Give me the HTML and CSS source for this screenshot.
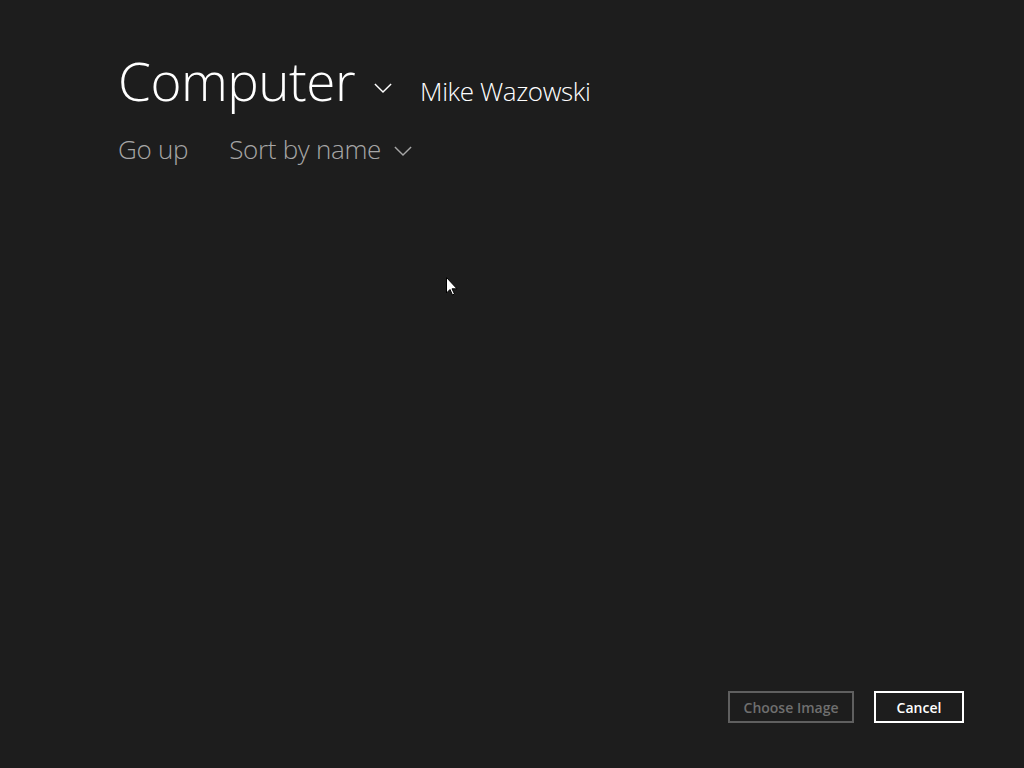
FILE: index.html
```html
<!DOCTYPE html>
<html lang="en">
<head>
<meta charset="UTF-8" />
<title>Computer</title>
<link rel="stylesheet" href="styles.css">
</head>
<body>
<div class="picker">
  <header class="top">
    <div class="location">
      <h1>Computer</h1>
      <svg class="chev big" viewBox="0 0 20 12" width="18" height="11"><path d="M1 1 L10 10 L19 1" fill="none" stroke="#fff" stroke-width="1.6"/></svg>
      <span class="user">Mike Wazowski</span>
    </div>
    <nav class="tools">
      <span class="tool">Go up</span>
      <span class="tool">Sort by name
        <svg class="chev" viewBox="0 0 20 12" width="18" height="11"><path d="M1 1 L10 10 L19 1" fill="none" stroke="#a6a6a6" stroke-width="1.6"/></svg>
      </span>
    </nav>
  </header>

  <main class="files"></main>

  <footer class="actions">
    <button class="btn disabled">Choose Image</button>
    <button class="btn">Cancel</button>
  </footer>
</div>

<svg class="cursor" viewBox="0 0 12 19" width="12" height="19"><path d="M0.5 0.5 L0.5 16 L4 12.5 L6.5 18 L8.5 17 L6 11.8 L11 11.8 Z" fill="#fff" stroke="#000" stroke-width="1"/></svg>
</body>
</html>
```

FILE: styles.css
```css
/* Selector de archivos, tema oscuro */
body {
  margin: 0; padding: 0; background: #1d1d1d; color: #fff;
  font-family: "Open Sans", "Noto Sans", sans-serif;
  overflow: hidden;
}
.picker {
  height: 768px; display: flex; flex-direction: column;
  padding: 0 60px 0 118px; box-sizing: border-box;
}

.top { padding-top: 48px; }
.location {
  display: flex; align-items: baseline;
}
h1 {
  margin: 0; font-weight: 300; font-size: 53px; line-height: 66px;
  letter-spacing: -0.5px;
}
.chev.big { margin: 0 28px 0 19px; position: relative; top: -7px; }
.user {
  font-size: 26px; font-weight: 300; letter-spacing: -0.4px;
}

.tools {
  display: flex; gap: 41px; margin-top: 17px;
  color: #a6a6a6; font-size: 26px; font-weight: 300; letter-spacing: -0.3px;
}
.tool { display: flex; align-items: center; }
.tool .chev { margin-left: 13px; margin-top: 4px; }

.files { flex: 1; }

.actions {
  display: flex; justify-content: flex-end; gap: 20px;
  padding-bottom: 45px;
}
.btn {
  font-family: "Open Sans", sans-serif; font-size: 14px; font-weight: 600;
  background: transparent; color: #fff;
  border: 2px solid #fff; height: 32px; min-width: 90px;
  padding: 0 12px;
}
.btn.disabled {
  color: #6f6f6f; border-color: #5f5f5f; width: 126px;
}

.cursor { position: absolute; left: 446px; top: 277px; }
```
